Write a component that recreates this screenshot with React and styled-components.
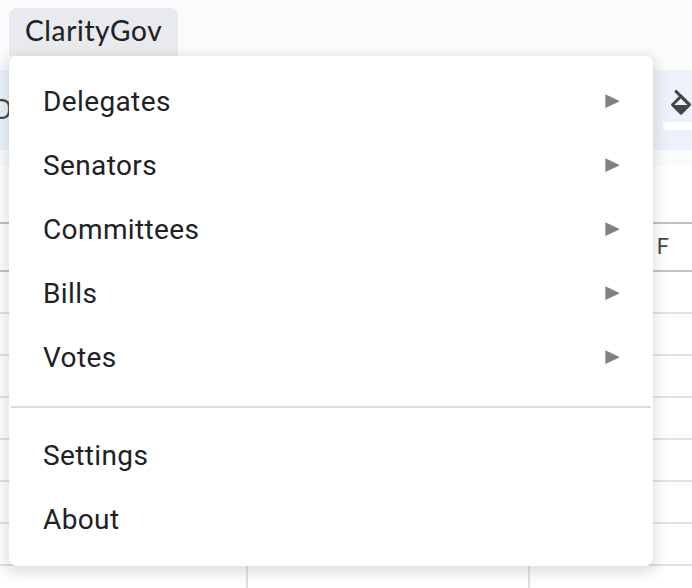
import React from "react";
import styled, { createGlobalStyle } from "styled-components";

const GlobalStyle = createGlobalStyle`
  * { box-sizing: border-box; }
  body { margin: 0; background: #fff; }
`;

const Screen = styled.div`
  position: relative;
  width: 692px;
  height: 588px;
  overflow: hidden;
  display: flex;
  flex-direction: column;
  background: #fff;
  font-family: Roboto, "Liberation Sans", sans-serif;
  color: #202124;
`;

const MenuBar = styled.header`
  flex: none;
  height: 70px;
  padding: 8px 0 0 9px;
  background: #f9fbfd;
`;

const MenuTab = styled.div`
  width: 169px;
  height: 48px;
  padding-left: 16px;
  border-radius: 8px 8px 0 0;
  background: #e8eaed;
  font-family: Lato, sans-serif;
  font-size: 28px;
  line-height: 45px;
  letter-spacing: 0.65px;
  -webkit-text-stroke: 0.12px #202124;
  white-space: nowrap;
`;

const Toolbar = styled.div`
  flex: none;
  display: flex;
  justify-content: space-between;
  height: 80px;
  background: #edf2fa;
`;

const FontLabel = styled.span`
  margin-left: -6px;
  font-size: 28px;
  line-height: 80px;
  color: #444746;
`;

const FillButton = styled.div`
  display: flex;
  flex-direction: column;
  width: 29px;
  padding-top: 18px;
  overflow: hidden;

  svg { flex: none; margin-left: 6px; }
`;

const Swatch = styled.div`
  flex: none;
  height: 8px;
  margin-top: 5px;
  background: #fff;
`;

const ToolbarGap = styled.div`
  flex: none;
  height: 16px;
  background: #f9fbfd;
`;

const FormulaBar = styled.div`
  flex: none;
  height: 58px;
  border-bottom: 2px solid #c0c0c0;
`;

const ColumnHeader = styled.div`
  flex: none;
  height: 48px;
  padding-right: 23px;
  border-bottom: 2px solid #c0c4c4;
  text-align: right;
  font-size: 22px;
  line-height: 46px;
  color: #444746;
`;

const GridRow = styled.div`
  flex: none;
  display: grid;
  grid-template-columns: 248px 282px 1fr;
  height: 42px;
  border-bottom: 2px solid #e1e1e1;
`;

const Cell = styled.div`
  border-right: 2px solid #e1e1e1;
`;

const Menu = styled.nav`
  position: absolute;
  left: 9px;
  top: 56px;
  width: 644px;
  height: 510px;
  padding: 13px 2px;
  border-radius: 8px;
  background: #fff;
  box-shadow: 0 4px 12px 4px rgba(60, 64, 67, 0.15);
`;

const MenuItem = styled.div`
  display: flex;
  align-items: center;
  justify-content: space-between;
  height: 64px;
  padding: 0 31px 0 32px;
  font-size: 28px;
  letter-spacing: 0.38px;

  svg { display: block; }
`;

const Divider = styled.div`
  height: 2px;
  margin: 17px 0 15px;
  background: #dadce0;
`;

const Arrow = () => (
  <svg width="15" height="14" viewBox="0 0 15 14">
    <path d="M0.4 0.2L14.8 7.2L0.4 14Z" fill="#80807f" />
  </svg>
);

const PaintBucket = () => (
  <svg width="24" height="29" viewBox="0 0 24 29">
    <path d="M6.2 2.6L21 17.2" fill="none" stroke="#444746" strokeWidth="3" />
    <path d="M12 8.2L3.5 16.8L12 25.2L20.5 16.8Z" fill="none" stroke="#444746" strokeWidth="3" strokeLinejoin="round" />
    <path d="M3 17H21L12 26Z" fill="#444746" />
  </svg>
);

const SUBMENUS = ["Delegates", "Senators", "Committees", "Bills", "Votes"];
const ACTIONS = ["Settings", "About"];

export default function App() {
  return (
    <>
      <GlobalStyle />
      <Screen>
        <MenuBar>
          <MenuTab>ClarityGov</MenuTab>
        </MenuBar>
        <Toolbar>
          <FontLabel>D</FontLabel>
          <FillButton>
            <PaintBucket />
            <Swatch />
          </FillButton>
        </Toolbar>
        <ToolbarGap />
        <FormulaBar />
        <ColumnHeader>F</ColumnHeader>
        {Array.from({ length: 8 }, (_, i) => (
          <GridRow key={i}>
            <Cell />
            <Cell />
          </GridRow>
        ))}
        <Menu>
          {SUBMENUS.map((label) => (
            <MenuItem key={label}>
              <span>{label}</span>
              <Arrow />
            </MenuItem>
          ))}
          <Divider />
          {ACTIONS.map((label) => (
            <MenuItem key={label}>
              <span>{label}</span>
            </MenuItem>
          ))}
        </Menu>
      </Screen>
    </>
  );
}
